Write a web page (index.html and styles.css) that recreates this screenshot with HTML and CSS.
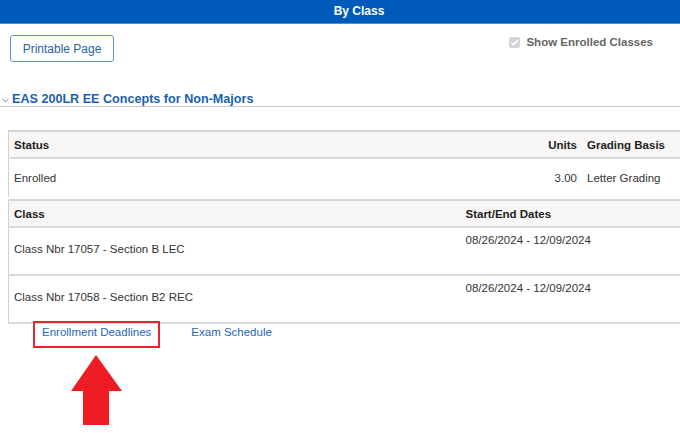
FILE: index.html
```html
<!DOCTYPE html>
<html lang="en">
<head>
    <meta charset="UTF-8">
    <meta name="viewport" content="width=device-width, initial-scale=1.0">
    <title>By Class</title>
    <link rel="stylesheet" href="styles.css">
</head>
<body>
    <div class="title-bar">By Class</div>

    <div class="toolbar">
        <button class="print-btn">Printable Page</button>
        <label class="show-enrolled">
            <svg class="check" width="11" height="11" viewBox="0 0 11 11">
                <rect x="0" y="0" width="11" height="11" rx="2" fill="#d4d4d4"/>
                <polyline points="2.5,5.8 4.6,7.8 8.6,3.2" fill="none" stroke="#fff" stroke-width="1.6"/>
            </svg>
            Show Enrolled Classes
        </label>
    </div>

    <div class="section-head">
        <svg class="chevron" width="7" height="5" viewBox="0 0 7 5">
            <polyline points="0.5,0.8 3.5,4 6.5,0.8" fill="none" stroke="#888" stroke-width="1"/>
        </svg>
        <h4 class="section-title">EAS 200LR EE Concepts for Non-Majors</h4>
    </div>

    <!-- 状态表 -->
    <table class="grid grid-status">
        <thead>
            <tr>
                <th>Status</th>
                <th class="col-units">Units</th>
                <th class="col-grading">Grading Basis</th>
            </tr>
        </thead>
        <tbody>
            <tr>
                <td>Enrolled</td>
                <td class="col-units">3.00</td>
                <td class="col-grading">Letter Grading</td>
            </tr>
        </tbody>
    </table>

    <!-- 班级表 -->
    <table class="grid grid-class">
        <thead>
            <tr>
                <th class="col-class">Class</th>
                <th class="col-dates">Start/End Dates</th>
            </tr>
        </thead>
        <tbody>
            <tr>
                <td class="col-class">Class Nbr 17057 - Section B LEC</td>
                <td class="col-dates">08/26/2024 - 12/09/2024</td>
            </tr>
            <tr>
                <td class="col-class">Class Nbr 17058 - Section B2 REC</td>
                <td class="col-dates">08/26/2024 - 12/09/2024</td>
            </tr>
        </tbody>
    </table>

    <div class="links">
        <a href="#" class="link highlight">Enrollment Deadlines</a>
        <a href="#" class="link">Exam Schedule</a>
    </div>

    <svg class="arrow" width="52" height="71" viewBox="0 0 52 71">
        <polygon points="25,0 51,36 38,36 38,70 12,70 12,36 0,36" fill="#ee1c25"/>
    </svg>
</body>
</html>
```

FILE: styles.css
```css
/* 基础样式 */
* {
    margin: 0;
    padding: 0;
    box-sizing: border-box;
}

body {
    font-family: "Liberation Sans", Arial, sans-serif;
    font-size: 11.5px;
    color: #333;
    width: 680px;
    overflow: hidden;
    background: #fff;
}

/* 顶部标题栏 */
.title-bar {
    height: 24px;
    line-height: 23px;
    background-color: #005ab9;
    border-bottom: 1px solid #4f8fd6;
    color: #fff;
    font-size: 12px;
    font-weight: bold;
    text-align: center;
    padding-left: 38px;
}

/* 工具栏 */
.toolbar {
    display: flex;
    justify-content: space-between;
    align-items: flex-start;
    padding: 11px 27px 0 10px;
    height: 67px;
}

.print-btn {
    font-family: inherit;
    font-size: 12px;
    color: #2a5fa6;
    background: #fff;
    border: 1px solid #5e92d2;
    border-radius: 3px;
    width: 104px;
    height: 27px;
}

.show-enrolled {
    display: flex;
    align-items: center;
    gap: 6px;
    color: #666;
    font-weight: bold;
    margin-top: 1px;
}

/* 区块标题 */
.section-head {
    display: flex;
    align-items: center;
    gap: 3px;
    padding-left: 2px;
    height: 16px;
    border-bottom: 1px solid #c9c9c9;
}

.chevron {
    margin-top: 3px;
}

.section-title {
    font-size: 12.6px;
    font-weight: bold;
    color: #1a5fb4;
    line-height: 14px;
}

/* 表格 */
.grid {
    margin-left: 8px;
    width: 680px;
    border-collapse: collapse;
    border-left: 1px solid #d2d0ce;
}

.grid-status {
    margin-top: 23px;
}

.grid-class {
    margin-top: 2px;
}

.grid th {
    background-color: #f8f7f5;
    font-weight: bold;
    color: #222;
    text-align: left;
    height: 27px;
    padding: 0 5px;
    border-top: 2px solid #d8d6d3;
    border-bottom: 2px solid #dcdad7;
}

.grid td {
    padding: 0 5px;
    height: 39px;
}

.grid-class td {
    height: 48px;
    vertical-align: top;
    border-bottom: 2px solid #dcdad7;
}

.grid-class td.col-class {
    padding-top: 15px;
}

.grid-class td.col-dates {
    padding-top: 6px;
}

.col-units {
    width: 74px;
    text-align: right;
}

.grid th.col-units {
    text-align: right;
}

.col-grading {
    width: 106px;
}

.col-class {
    width: 452px;
}

/* 链接 */
.links {
    display: flex;
    align-items: flex-start;
    gap: 31px;
    padding-left: 33px;
    margin-top: -3px;
}

.link {
    color: #2566b8;
    text-decoration: none;
    line-height: 14px;
}

.highlight {
    display: inline-block;
    border: 2px solid #e3262e;
    padding: 2px 7px 7px 7px;
}

.links .link:not(.highlight) {
    padding-top: 4px;
}

/* 红色箭头 */
.arrow {
    display: block;
    margin: 7px 0 0 71px;
}
```
